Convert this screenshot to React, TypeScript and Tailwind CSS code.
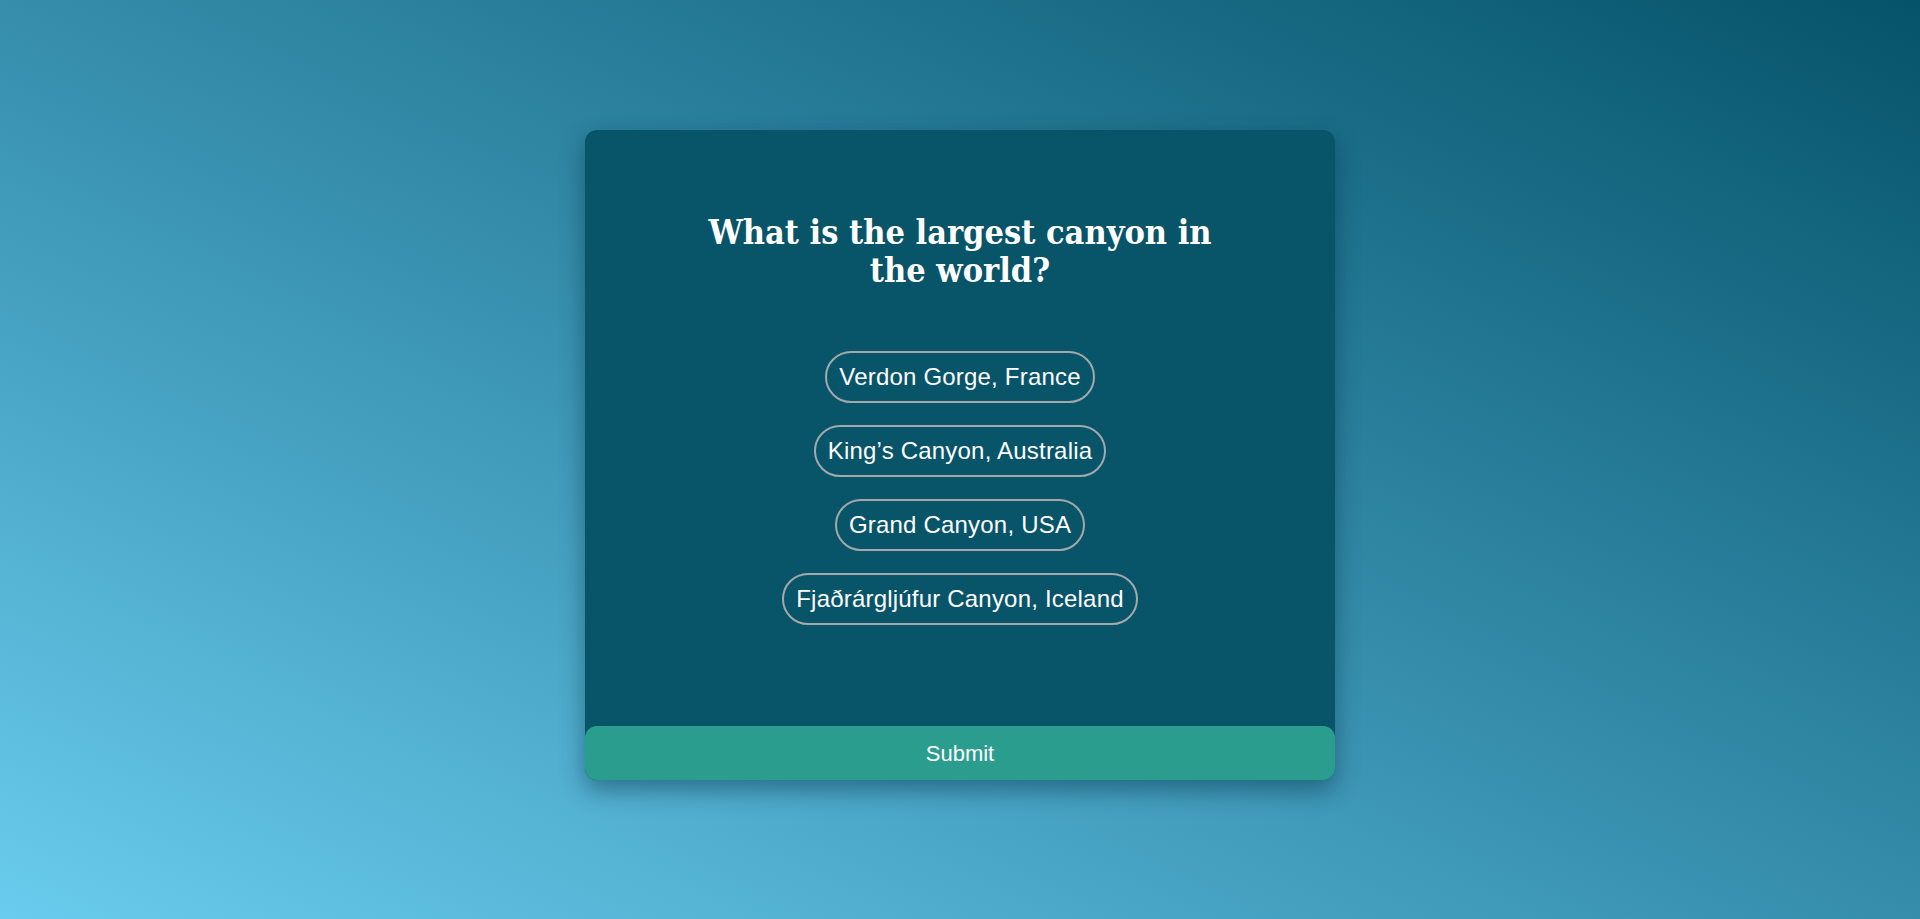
import { useState } from 'react';

const options = [
  'Verdon Gorge, France',
  'King\u2019s Canyon, Australia',
  'Grand Canyon, USA',
  'Fjaðrárgljúfur Canyon, Iceland',
];

export default function App() {
  const [selected, setSelected] = useState<number | null>(null);

  return (
    <div className="min-h-screen w-full bg-[linear-gradient(to_top_right,#6accee_0%,#3a93b2_45%,#05536a_100%)] pt-[130px] font-['Liberation_Sans',sans-serif]">
      {/* Quiz card */}
      <div className="mx-auto flex h-[650px] w-[750px] flex-col rounded-xl bg-[#085469] shadow-[0_10px_24px_rgba(0,40,60,0.45)]">
        <h1 className="mx-auto mt-[83px] max-w-[530px] text-center font-['DejaVu_Serif_Condensed','DejaVu_Serif',serif] text-[34px] font-bold leading-[38px] text-white [font-stretch:condensed]">
          What is the largest canyon in the world?
        </h1>

        <div className="mt-[62px] flex flex-col items-center gap-[22px]">
          {options.map((opt, i) => (
            <button
              key={opt}
              onClick={() => setSelected(i)}
              className={`rounded-full border-2 border-[#a3a9ab] px-3 py-[10px] text-[24px] leading-[28px] tracking-[0.2px] text-white ${
                selected === i ? 'bg-[#2a9d8f]' : 'bg-transparent'
              }`}
            >
              {opt}
            </button>
          ))}
        </div>

        <button className="mt-auto h-[54px] w-full rounded-xl bg-[#2a9d8f] text-[22px] text-white">
          Submit
        </button>
      </div>
    </div>
  );
}
